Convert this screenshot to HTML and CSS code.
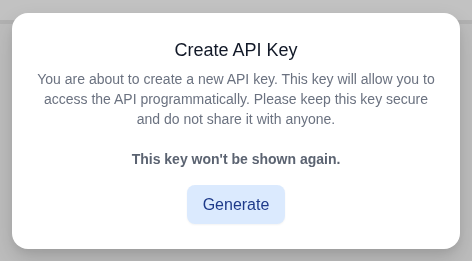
FILE: index.html
```html
<!DOCTYPE html>
<html lang="en">
<head>
    <meta charset="utf-8">
    <title>Create API Key</title>
    <link rel="stylesheet" href="styles.css">
</head>
<body>
<div class="page">
    <div class="page-header"></div>
</div>
<div class="overlay">
    <div class="modal">
        <h3 class="modal-title">Create API Key</h3>
        <p class="modal-text">You are about to create a new API key. This key will allow you to access the API programmatically. Please keep this key secure and do not share it with anyone.</p>
        <p class="modal-warning">This key won't be shown again.</p>
        <button type="button" class="btn-generate">Generate</button>
    </div>
</div>
</body>
</html>
```

FILE: styles.css
```css
html, body { margin: 0; height: 100%; }
body {
    background: #bdbdbd;
    font-family: "Liberation Sans", Arial, Helvetica, sans-serif;
}

.page { height: 100%; }
.page-header {
    height: 20px;
    background: #c2c2c2;
    border-bottom: 4px solid #b1b1b1;
}

/* dialog sits over the page */
.overlay {
    position: fixed;
    top: 0; left: 0; right: 0; bottom: 0;
    display: flex;
    align-items: center;
    justify-content: center;
}

.modal {
    box-sizing: border-box;
    width: 448px;
    height: 236px;
    margin-top: 1px;
    padding: 25px 24px 24px;
    background: #fff;
    border-radius: 16px;
    box-shadow: 0 10px 22px rgba(0, 0, 0, 0.14), 0 4px 8px rgba(0, 0, 0, 0.06);
    text-align: center;
}

.modal-title {
    margin: 0 0 7px;
    font-size: 18px;
    line-height: 24px;
    font-weight: 500;
    color: #111827;
}

.modal-text {
    margin: 0;
    font-size: 14px;
    line-height: 20px;
    color: #6b7280;
}

.modal-warning {
    margin: 20px 0 0;
    font-size: 14px;
    line-height: 20px;
    font-weight: bold;
    color: #5b6371;
}

.btn-generate {
    margin-top: 16px;
    padding: 8px 16px;
    height: 39px;
    border: 0;
    border-radius: 8px;
    background: #dbeafe;
    color: #1e3a8a;
    font-family: inherit;
    font-size: 16px;
    line-height: 23px;
    box-shadow: 0 1px 2px rgba(0, 0, 0, 0.05);
    cursor: pointer;
}
```
